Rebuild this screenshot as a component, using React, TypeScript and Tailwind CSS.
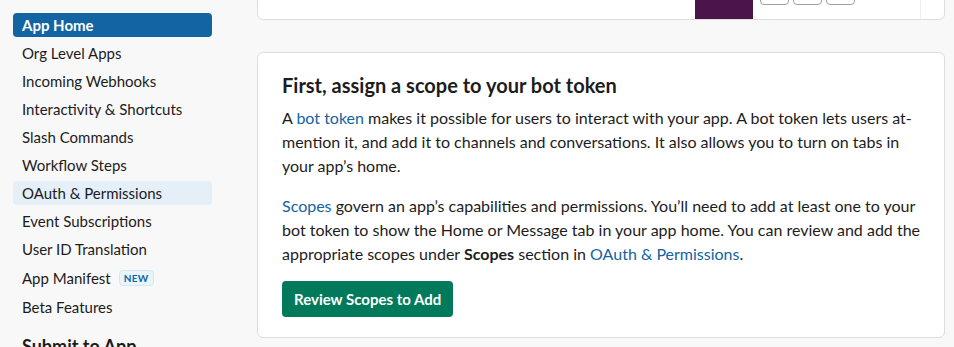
import React from 'react';

const navItems = [
  'App Home',
  'Org Level Apps',
  'Incoming Webhooks',
  'Interactivity & Shortcuts',
  'Slash Commands',
  'Workflow Steps',
  'OAuth & Permissions',
  'Event Subscriptions',
  'User ID Translation',
  'App Manifest',
  'Beta Features',
];

const Sidebar: React.FC = () => {
  return (
    <aside className="w-[257px] shrink-0 pl-[13px] pr-[45px] pt-[13px]">
      {navItems.map((item) => {
        const active = item === 'App Home';
        const hovered = item === 'OAuth & Permissions';
        const isManifest = item === 'App Manifest';
        return (
          <div
            key={item}
            className={`flex items-center px-[9px] rounded-[4px] mb-1 text-[15px] ${isManifest ? 'h-[26px]' : 'h-6'} ${
              active
                ? 'bg-[#1264a3] text-white font-bold'
                : hovered
                  ? 'bg-[#e4eff8] text-[#1d1c1d]'
                  : 'text-[#1d1c1d]'
            }`}
          >
            {item}
            {isManifest && (
              <span className="ml-[8px] h-[16px] px-[4px] flex items-center rounded-[4px] border border-[#d2e7f5] bg-[#e8f5fa] text-[#1264a3] text-[10px] font-bold tracking-[0.3px]">
                NEW
              </span>
            )}
          </div>
        );
      })}
      <h3 className="mt-[15px] px-[9px] text-[18px] leading-6 font-bold text-[#1d1c1d]">Submit to App</h3>
    </aside>
  );
};

const App: React.FC = () => {
  return (
    <div
      className="h-[347px] overflow-hidden bg-[#f8f8f8] flex text-[#1d1c1d]"
      style={{ fontFamily: 'Lato, "Noto Sans", sans-serif' }}
    >
      <Sidebar />

      <main className="flex-1 pr-[9px]">
        {/* Preview card, scrolled mostly out of view */}
        <div className="-mt-[42px] h-[62px] bg-white border border-[#dddddd] rounded-[6px] flex justify-end overflow-hidden">
          <div className="mr-[23px] w-[226px] flex border-r border-[#eeeeee]">
            <div className="w-[58px] bg-[#4a154b]" />
            <div className="pl-[7px] flex items-end gap-[4px] pb-[14px]">
              <div className="w-[29px] h-[24px] border border-[#a0a0a0] rounded-[4px]" />
              <div className="w-[29px] h-[24px] border border-[#a0a0a0] rounded-[4px]" />
              <div className="w-[29px] h-[24px] border border-[#a0a0a0] rounded-[4px]" />
            </div>
          </div>
        </div>

        {/* Scope card */}
        <div className="mt-[32px] bg-white border border-[#dddddd] rounded-[6px] px-6 pt-[20px] pb-[20px]">
          <h2 className="text-[20px] leading-6 font-bold mb-[9px]">First, assign a scope to your bot token</h2>
          <p className="text-[16px] leading-6">
            A <span className="text-[#1264a3]">bot token</span> makes it possible for users to interact with your app. A bot
            token lets users at-mention it, and add it to channels and conversations. It also allows you to turn on tabs in
            your app’s home.
          </p>
          <p className="text-[16px] leading-6 mt-4">
            <span className="text-[#1264a3]">Scopes</span> govern an app’s capabilities and permissions. You’ll need to add at
            least one to your bot token to show the Home or Message tab in your app home. You can review and add the
            appropriate scopes under <span className="font-bold">Scopes</span> section in{' '}
            <span className="text-[#1264a3]">OAuth &amp; Permissions</span>.
          </p>
          <button className="mt-[15px] h-9 px-3 rounded-[4px] bg-[#007a5a] text-white text-[15px] font-bold">
            Review Scopes to Add
          </button>
        </div>
      </main>
    </div>
  );
};

export default App;
